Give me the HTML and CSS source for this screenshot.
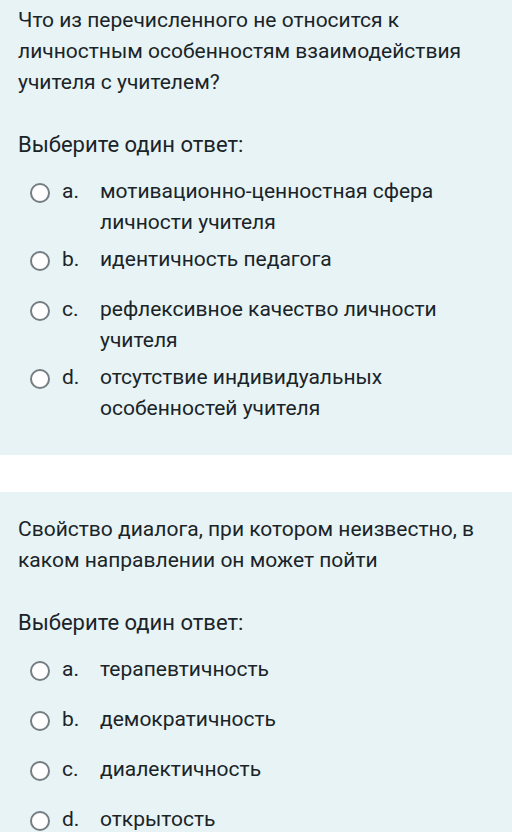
FILE: index.html
```html
<!DOCTYPE html>
<html lang="ru">
<head>
    <meta charset="UTF-8">
    <meta name="viewport" content="width=device-width, initial-scale=1.0">
    <title>Тест</title>
    <link rel="stylesheet" href="styles.css">
</head>
<body>
    <div class="page">
        <div class="formulation">
            <div class="qtext">Что из перечисленного не относится к личностным особенностям взаимодействия учителя с учителем?</div>
            <div class="prompt">Выберите один ответ:</div>
            <div class="answer">
                <div class="option">
                    <span class="radio"></span>
                    <span class="letter">a.</span>
                    <span class="text">мотивационно-ценностная сфера личности учителя</span>
                </div>
                <div class="option">
                    <span class="radio"></span>
                    <span class="letter">b.</span>
                    <span class="text">идентичность педагога</span>
                </div>
                <div class="option">
                    <span class="radio"></span>
                    <span class="letter">c.</span>
                    <span class="text">рефлексивное качество личности учителя</span>
                </div>
                <div class="option">
                    <span class="radio"></span>
                    <span class="letter">d.</span>
                    <span class="text">отсутствие индивидуальных особенностей учителя</span>
                </div>
            </div>
        </div>

        <div class="formulation">
            <div class="qtext">Свойство диалога, при котором неизвестно, в каком направлении он может пойти</div>
            <div class="prompt">Выберите один ответ:</div>
            <div class="answer">
                <div class="option">
                    <span class="radio"></span>
                    <span class="letter">a.</span>
                    <span class="text">терапевтичность</span>
                </div>
                <div class="option">
                    <span class="radio"></span>
                    <span class="letter">b.</span>
                    <span class="text">демократичность</span>
                </div>
                <div class="option">
                    <span class="radio"></span>
                    <span class="letter">c.</span>
                    <span class="text">диалектичность</span>
                </div>
                <div class="option">
                    <span class="radio"></span>
                    <span class="letter">d.</span>
                    <span class="text">открытость</span>
                </div>
            </div>
        </div>
    </div>
</body>
</html>
```

FILE: styles.css
```css
body {
    margin: 0;
    background-color: #fff;
    color: #1a2428;
    font-family: Roboto, "Noto Sans", sans-serif;
    font-size: 21px;
    line-height: 31px;
}

.page {
    margin-top: -17px;
}

.formulation {
    background-color: #e7f3f5;
    padding: 22px 18px 28px 18px;
    margin-bottom: 37px;
}

.qtext {
    margin-bottom: 31px;
}

.prompt {
    font-size: 22px;
    margin-bottom: 13px;
}

.answer {
    padding-left: 12px;
}

.option {
    display: flex;
    align-items: flex-start;
    min-height: 50px;
    padding: 3px 0;
    box-sizing: border-box;
}

.radio {
    flex: none;
    width: 16px;
    height: 16px;
    border: 2px solid #767d82;
    border-radius: 50%;
    background-color: #fff;
    margin-top: 7px;
}

.letter {
    flex: none;
    width: 38px;
    margin-left: 12px;
}

.text {
    flex: 1;
    padding-right: 50px;
}
```
